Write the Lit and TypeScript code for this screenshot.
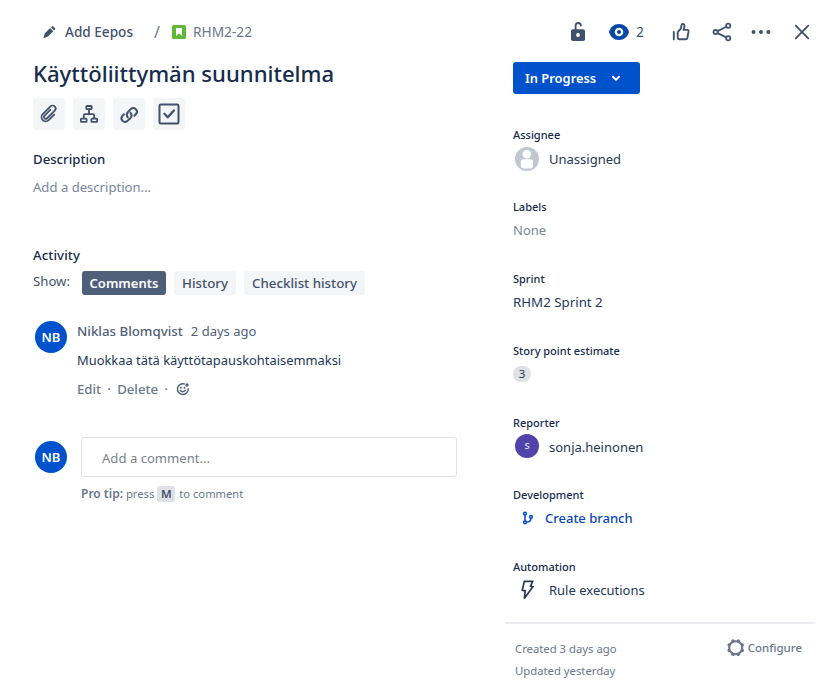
import { LitElement, html, css, svg, type TemplateResult, type SVGTemplateResult } from "lit";
import { customElement } from "lit/decorators.js";

const icon = (body: SVGTemplateResult, size = 24, cls = "") =>
  html`<svg class="icon ${cls}" width=${size} height=${size} viewBox="0 0 ${size} ${size}" fill="none" stroke="currentColor" stroke-width="2" stroke-linecap="round" stroke-linejoin="round">${body}</svg>`;

const icons = {
  pencil: svg`<path stroke="none" fill="currentColor" d="M2.600 13.600l1.100-4.200 5.400-5.400 3.200 3.200-5.400 5.400-3.700 1.400q-.7.1-.6-.4zM9.900 3.300l.9-.9q.7-.6 1.400 0l1.700 1.700q.7.7.1 1.400l-.9.900z"/>`,
  story: svg`<rect stroke="none" fill="#5fb83a" width="14" height="14" rx="1.500"/><path stroke="none" fill="#fff" d="M4 3.600q0-.6.6-.6h4.800q.6 0 .6.600V11L7 8.200 4 11z"/>`,
  unlock: svg`<rect stroke="none" fill="currentColor" x="5" y="9.200" width="14" height="11.800" rx="1.800"/><circle cx="12" cy="15" r="1.900" fill="#fff" stroke="none"/><path stroke-width="1.900" d="M9.600 9.500V5.800Q9.600 3 12.200 3q2.700 0 2.700 2.600"/>`,
  eye: svg`<path stroke="none" fill="currentColor" d="M2 12C3.400 7.200 7 4 12 4S20.600 7.200 22 12C20.600 16.800 17 20 12 20S3.400 16.800 2 12z"/><circle cx="12" cy="12" r="3.200" stroke="#fff" stroke-width="2.200"/>`,
  thumb: svg`<path stroke-width="1.900" d="M4.800 12v7.400M8.700 17.500V12.700q0-.6.400-1L12 8.300l.5-3.200q.2-1.300 1.500-1.200 1.500.2 1.500 1.900 0 1.900-1 4.100h3.900q1.400.1 1.200 1.500l-1.300 6.600q-.3 1.300-1.600 1.300H10.200Q8.700 19.200 8.700 17.500"/>`,
  share: svg`<g stroke-width="1.800"><circle cx="5.600" cy="12.100" r="2.100"/><circle cx="18.200" cy="5.800" r="2.100"/><circle cx="18.200" cy="18.300" r="2.100"/><path d="M7.600 11.100l8.700-4.300M7.600 13.100l8.700 4.300"/></g>`,
  more: svg`<g stroke="none" fill="currentColor"><circle cx="4.600" cy="12" r="2"/><circle cx="12" cy="12" r="2"/><circle cx="19.400" cy="12" r="2"/></g>`,
  close: svg`<path stroke-width="1.800" d="M5.700 5.700l12.600 12.600M18.300 5.700L5.700 18.300"/>`,
  attach: svg`<path stroke-width="1.800" transform="translate(-.3 0) rotate(45 12 12)" d="M16.300 8.500v7.800a4.200 4.200 0 0 1-8.400 0V5.400a3 3 0 0 1 6 0v10.700a1.800 1.800 0 0 1-3.600 0V8"/>`,
  tree: svg`<g stroke-width="1.800"><rect x="9.300" y="4" width="5.400" height="3.200" rx=".6"/><rect x="3.900" y="16.600" width="5.700" height="3.200" rx=".6"/><rect x="14.400" y="16.600" width="5.700" height="3.200" rx=".6"/><path d="M12 7.500v4.500M6.800 16v-2.500q0-1.400 1.400-1.400h7.600q1.400 0 1.400 1.400V16"/></g>`,
  link: svg`<g stroke-width="1.800" transform="translate(12.100 12.400) scale(1.120) translate(-12 -11.600)"><path d="M10.800 14.200Q8.900 11.600 11 9.400l2.700-2.700q2.200-1.700 4.300.2 2 2.200.2 4.400l-1.500 1.500M13.300 10.200q1.900 2.600-.2 4.800l-2.800 2.600q-2.200 1.600-4.200-.3-1.900-2.100-.2-4.200l1.500-1.600"/></g>`,
  check: svg`<rect x="2.500" y="2.500" width="19" height="19" rx="1.300"/><path stroke-width="2.300" d="M7.400 11.800l3.300 3.500 6.200-6.900"/>`,
  chevron: svg`<path d="M5 6.700L8 9.800l3-3.100"/>`,
  emoji: svg`<g stroke-width="1.400"><path d="M10.300 2.900A5.400 5.400 0 1 0 14.200 7.600"/><path d="M6.200 9.300q2.500 2.900 5.200 0"/></g><g stroke="none" fill="currentColor"><circle cx="6.900" cy="6.700" r="1"/><circle cx="10.500" cy="6.700" r="1"/><circle cx="13" cy="4" r="1.700"/></g>`,
  person: svg`<circle cx="12" cy="12" r="12" fill="#c1c7d0" stroke="none"/><circle cx="11.800" cy="7.300" r="4.300" fill="#fff" stroke="none"/><path fill="#fff" stroke="none" d="M5.800 15q0-2.800 3-2.800h6.200q3 0 3 2.800v3.500q0 3-3 3H8.800q-3 0-3-3z"/>`,
  branch: svg`<g stroke-width="1.500"><circle cx="5" cy="3.700" r="1.400"/><circle cx="5" cy="12.300" r="1.400"/><circle cx="11" cy="6.900" r="1.400"/><path d="M5 5.300v5.400M11 8.500q0 3.500-4.500 3.600"/></g>`,
  bolt: svg`<path stroke-width="1.700" stroke-linejoin="miter" d="M9.300 3.300h8.300l-2 4.900 2.200.6L9.300 20.400l1-7.600-3-.5z"/>`,
  gear: svg`<circle cx="9.700" cy="9.700" r="6.500" stroke-width="2.100"/>${[22.5, 67.5, 112.5, 157.5, 202.5, 247.5, 292.5, 337.5].map(
    (a) => svg`<path stroke-width="2.600" transform="rotate(${a} 9.700 9.700)" d="M9.300 2.300h.8"/>`
  )}`,
};

@customElement("issue-field")
export class IssueField extends LitElement {
  static properties = { label: {} };
  declare label: string;
  static styles = css`
    :host { display: block; height: 72px; }
    .label { height: 16px; font: 500 11px/15px "Noto Sans", sans-serif; color: #172b4d; }
    .value { height: 32px; display: flex; align-items: center; }
    :host([compact]) .value { height: 30px; }
  `;
  render() {
    return html`<div class="label">${this.label}</div><div class="value"><slot></slot></div>`;
  }
}

@customElement("app-root")
export class AppRoot extends LitElement {
  static styles = css`
    :host { display: block; height: 690px; overflow: hidden; background: #fff; color: #253858; font: 400 13px/20px "Noto Sans", "Open Sans", sans-serif; }
    * { box-sizing: border-box; }
    .page { display: grid; grid-template-columns: 472px 310px; height: 690px; padding-left: 33px; }
    .icon { display: block; flex: none; }
    .row { display: flex; align-items: center; }
    .slate { color: #42526e; }
    .grey { color: #7a869a; }
    .crumbs { height: 40px; margin-top: 12px; padding-left: 8px; color: #6b778c; }
    .crumbs .parent { margin-left: 8px; color: #42526e; font-weight: 500; font-size: 13.600px; width: 68px; white-space: nowrap; }
    .crumbs .slash { margin: 0 11px 0 21px; font-size: 16px; width: 7px; }
    .crumbs .key { margin-left: 7px; font-size: 13.700px; }
    h1 { margin: 5px 0 0; font: 500 22.100px/32px "Noto Sans", sans-serif; color: #172b4d; white-space: nowrap; }
    .tools { display: flex; gap: 8px; margin-top: 9px; }
    .tools .tool { width: 32px; height: 32px; border-radius: 3px; background: #f4f5f7; color: #42526e; display: grid; place-items: center; }
    h2 { margin: 0; font: 500 13.200px/20px "Noto Sans", sans-serif; color: #172b4d; }
    .desc { margin-top: 19px; }
    .placeholder { margin-top: 8px; color: #7a869a; font-size: 13.100px; }
    .activity { margin-top: 48px; letter-spacing: .1px; }
    .filters { display: flex; margin-top: 6px; height: 24px; }
    .filters .show { width: 49px; color: #42526e; font-size: 13.200px; }
    .chip { height: 24px; margin-right: 8px; border-radius: 3px; background: #f4f5f7; color: #42526e; font-weight: 500; font-size: 13.300px; line-height: 24px; text-align: center; white-space: nowrap; }
    .chip.on { background: #505f79; color: #fff; font-weight: 600; font-size: 13px; }
    .c1 { width: 84px; } .c2 { width: 62px; } .c3 { width: 121px; }
    .avatar { flex: none; width: 32px; height: 32px; border-radius: 50%; background: #0052cc; color: #fff; font: 600 13px/32px "Noto Sans", sans-serif; text-align: center; }
    .comment { display: flex; margin: 26px 0 0 2px; gap: 10px; }
    .by { display: flex; gap: 8px; color: #505f79; }
    .by b { font-weight: 500; font-size: 13.300px; }
    .text { margin-top: 9px; font-size: 12.900px; white-space: nowrap; }
    .actions { display: flex; align-items: center; margin-top: 9px; height: 20px; color: #6b778c; font-weight: 500; font-size: 13.200px; }
    .actions .dot { width: 16px; text-align: center; }
    .actions .icon { color: #505f79; }
    .editor { display: flex; margin: 38px 0 0 2px; gap: 14px; }
    .editor .avatar { margin-top: 4px; }
    .input { width: 376px; height: 40px; border: 1px solid #dfe1e6; border-radius: 3px; padding-left: 20px; line-height: 40px; color: #7a7f8a; font-size: 13.100px; }
    .tip { display: flex; align-items: center; margin-top: 9px; height: 16px; font-size: 11.200px; line-height: 16px; color: #6b778c; }
    .tip b { font-size: 12px; font-weight: 600; margin-right: 3px; }
    .tip kbd { width: 18px; height: 16px; margin: 0 4px 0 3px; border-radius: 3px; background: #dfe1e6; color: #42526e; text-align: center; font: 600 11.500px/16px "Noto Sans", sans-serif; }
    .bar { height: 40px; margin: 12px 0 0 61px; color: #42526e; }
    .eye { margin-left: 17px; color: #0747a6; }
    .watch { width: 32px; padding-left: 5px; margin-right: 6px; font-size: 13.700px; color: #344f80; }
    .bar .g17 { margin-left: 17px; } .bar .g15 { margin-left: 15px; }
    .status { width: 127px; height: 32px; margin: 10px 0 33px 8px; padding-left: 12px; border-radius: 3px; background: #0052cc; color: #fff; font-weight: 600; font-size: 12.900px; }
    .status .icon { margin-left: 12px; }
    .fields { padding-left: 8px; height: 495px; }
    .in { margin-left: 2px; }
    .in-text { margin-left: 10px; }
    .sprint { font-size: 13.300px; }
    .pill { width: 18px; height: 16px; border-radius: 8px; background: #dfe1e6; font-size: 11.500px; line-height: 16px; text-align: center; }
    .reporter { width: 24px; height: 24px; border-radius: 50%; background: #5243aa; color: #dcd8f2; font: 600 9.500px/24px "Noto Sans", sans-serif; text-align: center; margin-top: -2px; }
    .branch { margin-left: 7px; color: #0052cc; }
    .link { color: #0747b8; font-weight: 500; font-size: 13px; margin-left: 9px; }
    .foot { display: flex; justify-content: space-between; width: 309px; border-top: 2px solid #ebecf0; padding: 14px 12px 0 10px; color: #6b778c; font-size: 11.300px; line-height: 22px; }
    .config { display: flex; align-items: center; height: 20px; font-weight: 500; font-size: 11.500px; gap: 2px; }
  `;

  render(): TemplateResult {
    return html`<main class="page">
      <section>
        <nav class="crumbs row">
          <span class="slate">${icon(icons.pencil, 16)}</span><span class="parent">Add Eepos</span>
          <span class="slash">/</span>${icon(icons.story, 14)}<span class="key">RHM2-22</span>
        </nav>
        <h1>Käyttöliittymän suunnitelma</h1>
        <div class="tools">
          ${[icons.attach, icons.tree, icons.link, icons.check].map((i) => html`<span class="tool">${icon(i)}</span>`)}
        </div>
        <h2 class="desc">Description</h2>
        <div class="placeholder">Add a description...</div>
        <h2 class="activity">Activity</h2>
        <div class="filters">
          <span class="show">Show:</span><span class="chip on c1">Comments</span><span class="chip c2">History</span><span class="chip c3">Checklist history</span>
        </div>
        <article class="comment">
          <div class="avatar">NB</div>
          <div>
            <div class="by"><b>Niklas Blomqvist</b><span>2 days ago</span></div>
            <div class="text">Muokkaa tätä käyttötapauskohtaisemmaksi</div>
            <div class="actions"><span>Edit</span><span class="dot">·</span><span>Delete</span><span class="dot">·</span>${icon(icons.emoji, 16)}</div>
          </div>
        </article>
        <div class="editor">
          <div class="avatar">NB</div>
          <div>
            <div class="input">Add a comment...</div>
            <div class="tip"><b>Pro tip:</b><span>press</span><kbd>M</kbd><span>to comment</span></div>
          </div>
        </div>
      </section>
      <aside>
        <div class="bar row">
          ${icon(icons.unlock)}${icon(icons.eye, 24, "eye")}<span class="watch">2</span>${icon(icons.thumb)}${icon(icons.share, 24, "g17")}${icon(icons.more, 24, "g15")}${icon(icons.close, 24, "g17")}
        </div>
        <div class="status row">In Progress${icon(icons.chevron, 16)}</div>
        <div class="fields">
          <issue-field label="Assignee"><span class="in">${icon(icons.person)}</span><span class="in-text">Unassigned</span></issue-field>
          <issue-field compact label="Labels"><span class="grey">None</span></issue-field>
          <issue-field compact label="Sprint"><span class="sprint">RHM2 Sprint 2</span></issue-field>
          <issue-field compact label="Story point estimate"><span class="pill">3</span></issue-field>
          <issue-field label="Reporter"><span class="in reporter">S</span><span class="in-text">sonja.heinonen</span></issue-field>
          <issue-field compact label="Development"><span class="branch">${icon(icons.branch, 16)}</span><span class="link">Create branch</span></issue-field>
          <issue-field compact label="Automation"><span class="in">${icon(icons.bolt)}</span><span class="in-text">Rule executions</span></issue-field>
        </div>
        <footer class="foot">
          <div>Created 3 days ago<br />Updated yesterday</div>
          <div class="config">${icon(icons.gear, 20)}<span>Configure</span></div>
        </footer>
      </aside>
    </main>`;
  }
}
